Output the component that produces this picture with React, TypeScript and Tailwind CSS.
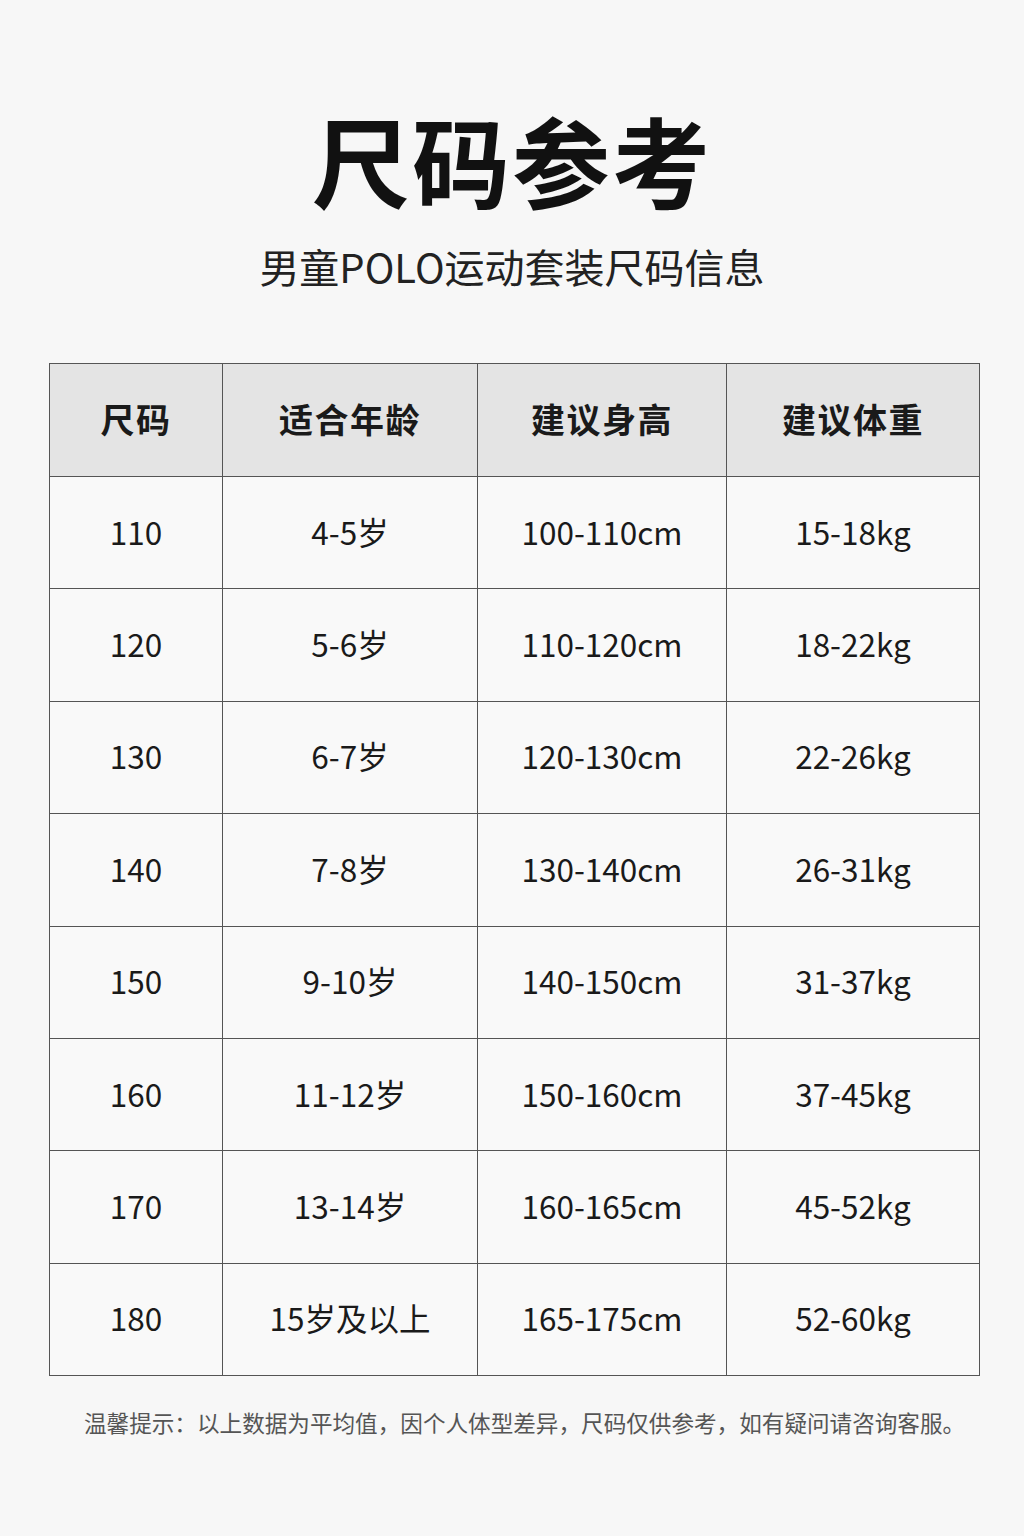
import React from "react";

const rows = [
  ["110", "4-5岁", "100-110cm", "15-18kg"],
  ["120", "5-6岁", "110-120cm", "18-22kg"],
  ["130", "6-7岁", "120-130cm", "22-26kg"],
  ["140", "7-8岁", "130-140cm", "26-31kg"],
  ["150", "9-10岁", "140-150cm", "31-37kg"],
  ["160", "11-12岁", "150-160cm", "37-45kg"],
  ["170", "13-14岁", "160-165cm", "45-52kg"],
  ["180", "15岁及以上", "165-175cm", "52-60kg"],
];

const headers = ["尺码", "适合年龄", "建议身高", "建议体重"];

const font = { fontFamily: '"Noto Sans CJK SC", "Noto Sans", sans-serif' };

export default function App() {
  return (
    <div className="w-[1024px] h-[1536px] bg-[#f7f7f7] text-[#111]" style={font}>
      {/* Title */}
      <div className="pt-[99px] flex flex-col items-center">
        <h1 className="text-[98px] leading-[118px] font-bold tracking-[2px] text-[#111]">尺码参考</h1>
        <p className="mt-[23px] text-[40px] leading-[52px] text-[#222]">男童POLO运动套装尺码信息</p>
      </div>

      {/* Table */}
      <div className="mt-[71px] px-[49px]">
        <table className="w-[930px] border-collapse table-fixed">
          <colgroup>
            <col className="w-[173px]" />
            <col className="w-[255px]" />
            <col className="w-[249px]" />
            <col className="w-[253px]" />
          </colgroup>
          <thead>
            <tr className="h-[113px] bg-[#e4e4e4]">
              {headers.map((h) => (
                <th key={h} className="border border-[#555] pb-[3px] text-[34px] font-bold text-[#1a1a1a] tracking-[1.5px]">
                  {h}
                </th>
              ))}
            </tr>
          </thead>
          <tbody>
            {rows.map((r) => (
              <tr key={r[0]} className="h-[112.4px] bg-[#f9f9f9]">
                {r.map((c, i) => (
                  <td key={i} className="border border-[#555] pb-[3px] text-center text-[31.5px] text-[#1a1a1a]">
                    {c}
                  </td>
                ))}
              </tr>
            ))}
          </tbody>
        </table>
      </div>

      {/* Note */}
      <p className="mt-[32px] pl-[84px] text-[22.6px] leading-[30px] text-[#555]">
        温馨提示：以上数据为平均值，因个人体型差异，尺码仅供参考，如有疑问请咨询客服。
      </p>
    </div>
  );
}
